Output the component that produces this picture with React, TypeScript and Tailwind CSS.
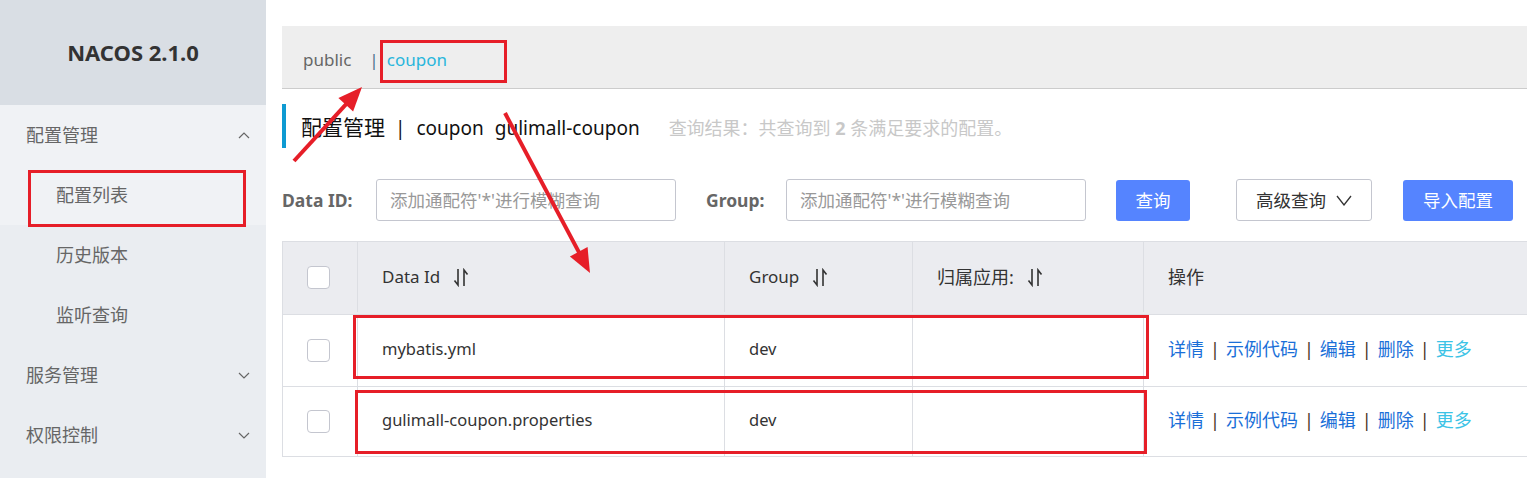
import React from "react";

const FONT = "font-['Noto_Sans','Noto_Sans_CJK_SC',sans-serif]";

const Chevron = ({ up }: { up?: boolean }) => (
  <svg width="12" height="7" viewBox="0 0 12 7" className="text-[#666]">
    <polyline
      points={up ? "1,6 6,1 11,6" : "1,1 6,6 11,1"}
      fill="none"
      stroke="currentColor"
      strokeWidth="1.2"
    />
  </svg>
);

const SortIcon = () => (
  <svg width="16" height="19" viewBox="0 0 16 19" className="ml-[13px] text-[#333]">
    <path d="M5 1 V17 L1.5 12.5" fill="none" stroke="currentColor" strokeWidth="1.6" />
    <path d="M11 18 V2 L14.5 6.5" fill="none" stroke="currentColor" strokeWidth="1.6" />
  </svg>
);

const MenuRow = ({ label, open }: { label: string; open?: boolean }) => (
  <div className="flex h-[60px] items-center justify-between pl-[26px] pr-[16px] text-[18px] text-[#666]">
    <span>{label}</span>
    <Chevron up={open} />
  </div>
);

const SubRow = ({ label }: { label: string }) => (
  <div className="flex h-[60px] items-center pl-[56px] text-[18px] text-[#666]">{label}</div>
);

const Checkbox = () => (
  <div className="h-[23px] w-[23px] rounded-[4px] border border-[#c4c6cf] bg-white" />
);

const Actions = () => {
  const links = ["详情", "示例代码", "编辑", "删除"];
  return (
    <div className="flex items-center text-[18px]">
      {links.map((l) => (
        <React.Fragment key={l}>
          <span className="text-[#1a6fd8]">{l}</span>
          <span className="mx-[6px] text-[#4a3428]">|</span>
        </React.Fragment>
      ))}
      <span className="text-[#3cc3e6]">更多</span>
    </div>
  );
};

const rows = [
  { id: "mybatis.yml", group: "dev" },
  { id: "gulimall-coupon.properties", group: "dev" },
];

function arrow(x1: number, y1: number, x2: number, y2: number) {
  const dx = x2 - x1;
  const dy = y2 - y1;
  const len = Math.hypot(dx, dy);
  const ux = dx / len;
  const uy = dy / len;
  const L = 24;
  const W = 10;
  const bx = x2 - ux * L;
  const by = y2 - uy * L;
  const nx = -uy;
  const ny = ux;
  return {
    line: `M${x1} ${y1} L${bx + ux * 4} ${by + uy * 4}`,
    head: `${x2},${y2} ${bx + nx * W},${by + ny * W} ${bx - nx * W},${by - ny * W}`,
  };
}

const arrows = [arrow(294, 161, 362, 87), arrow(505, 113, 590, 273)];

const boxes = [
  { x: 29.5, y: 171.5, w: 215, h: 54 },
  { x: 381.5, y: 41.5, w: 124, h: 40 },
  { x: 354.5, y: 316.5, w: 793, h: 61 },
  { x: 356.5, y: 391.5, w: 789, h: 61 },
];

const cols = "grid grid-cols-[75px_367px_188px_231px_1fr]";

export default function App() {
  return (
    <div className={`relative flex h-[478px] w-[1527px] overflow-hidden bg-white ${FONT}`}>
      <aside className="flex w-[266px] shrink-0 flex-col bg-[#eaedf1]">
        <div className="flex h-[105px] items-center justify-center bg-[#d9dee4] text-[22px] font-bold text-[#333]">
          NACOS 2.1.0
        </div>
        <div className="bg-[#f0f2f5]">
          <MenuRow label="配置管理" open />
          <SubRow label="配置列表" />
        </div>
        <SubRow label="历史版本" />
        <SubRow label="监听查询" />
        <MenuRow label="服务管理" />
        <MenuRow label="权限控制" />
      </aside>

      <main className="flex min-w-0 flex-1 flex-col pl-4 pt-[26px]">
        <div className="flex h-[63px] items-center border-b border-[#ccc] bg-[#eeeeee] pl-[21px] pt-[6px] text-[17px]">
          <span className="text-[#666]">public</span>
          <span className="ml-[18px] mr-[8px] text-[#4f6e8c]">|</span>
          <span className="text-[#29b6dc]">coupon</span>
        </div>

        <div className="mt-[15px] flex h-[44px] items-center border-l-4 border-[#0e9ad2] pl-[15px] pt-[4px] text-[#111]">
          <span className="text-[21px]">配置管理</span>
          <span className="ml-[10px] text-[19px]">|</span>
          <span className="ml-[11px] text-[19px]">coupon</span>
          <span className="ml-[11px] text-[19px]">gulimall-coupon</span>
          <span className="ml-[29px] text-[18px] text-[#c8c8c8]">
            查询结果：共查询到 <b className="font-bold">2</b> 条满足要求的配置。
          </span>
        </div>

        <div className="mt-[31px] flex h-[42px] items-center text-[17.5px]">
          <span className="w-[94px] font-bold text-[#666]">Data ID:</span>
          <div className="flex h-[42px] w-[300px] items-center rounded-[3px] border border-[#c4c6cf] pl-[13px] text-[#999]">
            添加通配符'*'进行模糊查询
          </div>
          <span className="ml-[30px] w-[80px] font-bold text-[#666]">Group:</span>
          <div className="flex h-[42px] w-[300px] items-center rounded-[3px] border border-[#c4c6cf] pl-[13px] text-[#999]">
            添加通配符'*'进行模糊查询
          </div>
          <button className="ml-[30px] flex h-[41px] w-[74px] items-center justify-center rounded-[3px] bg-[#5584ff] text-white">
            查询
          </button>
          <button className="ml-[46px] flex h-[42px] w-[136px] items-center justify-center gap-[10px] rounded-[3px] border border-[#c4c6cf] bg-white text-[#333]">
            高级查询
            <svg width="16" height="11" viewBox="0 0 16 11">
              <polyline points="1,1 8,10 15,1" fill="none" stroke="#333" strokeWidth="1.3" />
            </svg>
          </button>
          <button className="ml-[31px] flex h-[41px] w-[110px] items-center justify-center rounded-[3px] bg-[#5584ff] text-white">
            导入配置
          </button>
        </div>

        <div className="mt-[20px] border-l border-t border-[#dcdee3] text-[17px] text-[#333]">
          <div className={`${cols} h-[72px] bg-[#ebecf0] pb-[2px]`}>
            <div className="flex items-center border-r border-[#dcdee3] pl-[24px]">
              <Checkbox />
            </div>
            <div className="flex items-center border-r border-[#dcdee3] pl-[24px]">
              Data Id
              <SortIcon />
            </div>
            <div className="flex items-center border-r border-[#dcdee3] pl-[24px]">
              Group
              <SortIcon />
            </div>
            <div className="flex items-center border-r border-[#dcdee3] pl-[24px] text-[18px]">
              归属应用:
              <SortIcon />
            </div>
            <div className="flex items-center pl-[24px] text-[18px]">操作</div>
          </div>
          {rows.map((r) => (
            <div
              key={r.id}
              className={`${cols} h-[72px] border-t border-[#dcdee3] last:h-[71px] last:border-b`}
            >
              <div className="flex items-center border-r border-[#dcdee3] pl-[24px]">
                <Checkbox />
              </div>
              <div className="flex items-center border-r border-[#dcdee3] pb-[3px] pl-[24px] text-[16.5px]">
                {r.id}
              </div>
              <div className="flex items-center border-r border-[#dcdee3] pb-[3px] pl-[24px] text-[16.5px]">
                {r.group}
              </div>
              <div className="border-r border-[#dcdee3]" />
              <div className="flex items-center pb-[3px] pl-[24px]">
                <Actions />
              </div>
            </div>
          ))}
        </div>
      </main>

      <svg className="pointer-events-none absolute inset-0" width="1527" height="478">
        {boxes.map((b, i) => (
          <rect key={i} x={b.x} y={b.y} width={b.w} height={b.h} fill="none" stroke="#e61e28" strokeWidth="3" />
        ))}
        {arrows.map((a, i) => (
          <g key={i}>
            <path d={a.line} stroke="#e61e28" strokeWidth="4" fill="none" />
            <polygon points={a.head} fill="#e61e28" />
          </g>
        ))}
      </svg>
    </div>
  );
}
